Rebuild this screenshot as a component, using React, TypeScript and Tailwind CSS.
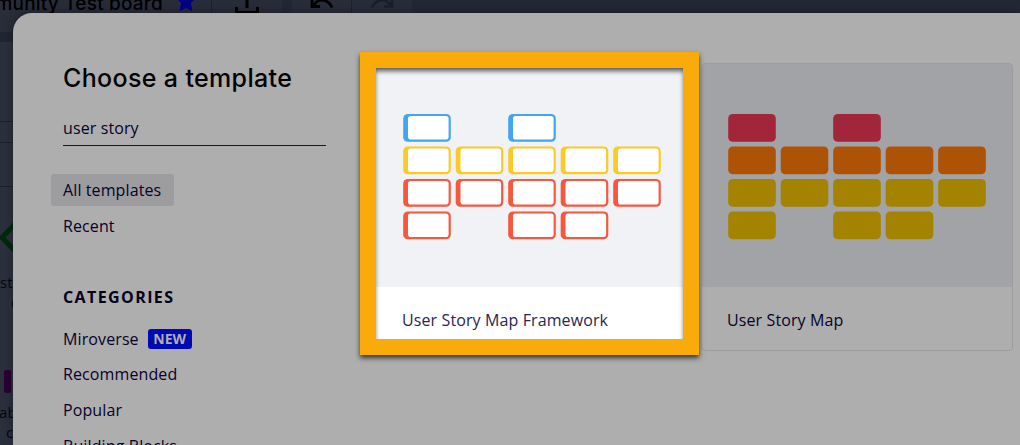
const BOARD_TILES = [
  [0, 2],
  [0, 1, 2, 3, 4],
  [0, 1, 2, 3, 4],
  [0, 2, 3],
];

const FRAMEWORK_COLORS = ["#42a5f1", "#f9cb28", "#f6583e", "#f6583e"];
const STORY_COLORS = ["#a12639", "#ae5305", "#a38300", "#a38300"];

const CATEGORIES = ["Recommended", "Popular", "Building Blocks"];

type StoryMapProps = {
  colors: string[];
  outlined?: boolean;
};

const StoryMap = ({ colors, outlined }: StoryMapProps) => {
  return (
    <svg width="260" height="128" viewBox="0 0 260 128">
      {BOARD_TILES.map((columns, row) =>
        columns.map((column) => {
          const x = 0.2 + column * 52.5;
          const y = row * 32.5;
          return (
            <g key={`${row}-${column}`}>
              <rect x={x} y={y} width="47.6" height="27.8" rx="4.6" fill={colors[row]} />
              {outlined && (
                <rect x={x + 4.8} y={y + 2.1} width="40.6" height="23.4" rx="2.8" fill="#fff" />
              )}
            </g>
          );
        })
      )}
    </svg>
  );
};

const BoardHeader = () => {
  return (
    <div className="flex h-8 w-full bg-[#292d3a] text-black">
      <div className="flex w-[212px] shrink-0 overflow-hidden border-r border-[#1f222e]">
        <div className="-mt-[10px] -ml-[42px] flex w-[205px] shrink-0 justify-end font-['Inter'] text-[19px] leading-7 font-medium tracking-[0.2px] whitespace-nowrap">
          Community Test board
        </div>
        <svg className="-mt-[9px] ml-[13px] shrink-0" width="20" height="21" viewBox="0 0 20 21">
          <path
            d="M10 1l2.7 6 6.3.7-4.7 4.3 1.6 7.4L10 16.500l-5.900 2.900L5.700 12 1 7.700 7.300 7z"
            fill="#00008a"
            stroke="#00008a"
            strokeLinejoin="round"
          />
        </svg>
      </div>
      <div className="w-[70px] shrink-0">
        <svg width="70" height="20" fill="none" stroke="#000" strokeWidth="3">
          <path d="M35 0v8M24.5 7v5.500h21V7" />
        </svg>
      </div>
      <div className="w-[10px] bg-[#242835]" />
      <div className="w-[60px] border-r border-[#1f222e]">
        <svg width="60" height="14" fill="none" strokeWidth="2.8" stroke="#000">
          <path d="M20 0v6.500h8M20 6.500l5-5c5-3 12-1 15 6" />
        </svg>
      </div>
      <div className="w-[60px]">
        <svg width="60" height="14" fill="none" strokeWidth="2.500" stroke="#1b1e2e">
          <path d="M40 0v6.500h-8M40 6.500l-5-5C30-1.500 23 .5 20 7.500" />
        </svg>
      </div>
      <div className="flex-1 bg-[#242835]" />
    </div>
  );
};

const BoardCanvas = () => {
  return (
    <div className="flex w-[13px] flex-col overflow-hidden text-[15px] leading-5 text-[#06060f]">
      <div className="h-[10px] bg-[#222532]" />
      <div className="h-20 border-b border-[#1d202c]" />
      <div className="h-[21px] border-b border-[#1d202c]" />
      <div className="h-11 border-b border-[#1d202c]" />
      <svg className="mt-[35px] shrink-0" width="13" height="32" viewBox="0 0 13 32">
        <path d="M16 1L2 15.500 16 30" fill="none" stroke="#002a0c" strokeWidth="5" />
      </svg>
      <div className="mt-[18px] shrink-0">st</div>
      <div className="shrink-0 pl-[11px]">o</div>
      <div className="mt-[58px] ml-1 h-[23px] w-[7px] shrink-0 rounded-xs bg-[#2b0035]" />
      <div className="mt-[9px] -ml-px shrink-0">ab</div>
      <div className="shrink-0 pl-[6px]">c</div>
    </div>
  );
};

const Sidebar = () => {
  return (
    <div className="flex w-[275px] shrink-0 flex-col pl-[38px]">
      <h1 className="mt-[47px] ml-3 font-['Inter'] text-[25px] leading-9 font-medium tracking-[0.35px] whitespace-nowrap text-black">
        Choose a template
      </h1>
      <div className="mt-[14px] ml-3 h-[36px] w-[263px] border-b border-[#0008a5] leading-9">
        user story
      </div>
      <div className="mt-7 flex flex-col items-start gap-1">
        <div className="h-8 w-[123px] rounded-[3px] bg-[#9d9da0] px-3 leading-8">All templates</div>
        <div className="h-8 px-3 leading-8">Recent</div>
      </div>
      <h2 className="mt-[39px] ml-3 text-[16px] leading-8 font-bold tracking-[1.4px] text-[#02001a]">
        CATEGORIES
      </h2>
      <div className="mt-[10px] flex flex-col">
        <div className="flex h-8 items-center px-3">
          <span>Miroverse</span>
          <span className="ml-[9px] h-5 w-11 rounded-[3px] bg-[#0009b3] text-center text-[14px] leading-5 font-bold text-[#aeaeae]">
            NEW
          </span>
        </div>
        <div className="mt-[3px] flex flex-col gap-1">
          {CATEGORIES.map((category) => (
            <div key={category} className="h-8 px-3 leading-8">
              {category}
            </div>
          ))}
        </div>
      </div>
    </div>
  );
};

const TemplatePicker = () => {
  return (
    <div className="absolute top-[13px] left-[13px] flex h-[432px] w-[1007px] overflow-hidden rounded-tl-[19px] bg-[#aeaeae] shadow-[0_0_12px_rgba(0,0,0,0.35)]">
      <Sidebar />
      <div className="mt-[50px] ml-[88px] flex items-start gap-[13px]">
        <div className="relative h-[288px] w-[312px] shrink-0">
          <div className="flex h-[276px] w-[307px] flex-col bg-white">
            <div className="h-[224px] bg-[#f1f2f6] pt-[51px] pl-[27px]">
              <StoryMap colors={FRAMEWORK_COLORS} outlined />
            </div>
            <div className="pt-[17px] pl-[26px] leading-8 text-[#2b2550]">User Story Map Framework</div>
          </div>
          <div className="absolute -top-[11px] -left-4 h-[303px] w-[339px] border-16 border-[#f8ab0a] shadow-[0_3px_5px_rgba(0,0,0,0.7),inset_0_4px_5px_-1px_rgba(0,0,0,0.65)]" />
        </div>
        <div className="h-[288px] w-[312px] shrink-0 overflow-hidden rounded-[4px] border border-[#9c9c9f]">
          <div className="h-[223px] bg-[#a2a3a7] pt-[50px] pl-[26px]">
            <StoryMap colors={STORY_COLORS} />
          </div>
          <div className="pt-[17px] pl-[25px] leading-8">User Story Map</div>
        </div>
      </div>
    </div>
  );
};

const App = () => {
  return (
    <div className="relative h-[445px] w-[1020px] overflow-hidden bg-[#2c303e] font-['Open_Sans','Noto_Sans',sans-serif] text-[16px] tracking-[0.11px] text-[#07022a]">
      <BoardHeader />
      <BoardCanvas />
      <TemplatePicker />
    </div>
  );
};

export default App;
